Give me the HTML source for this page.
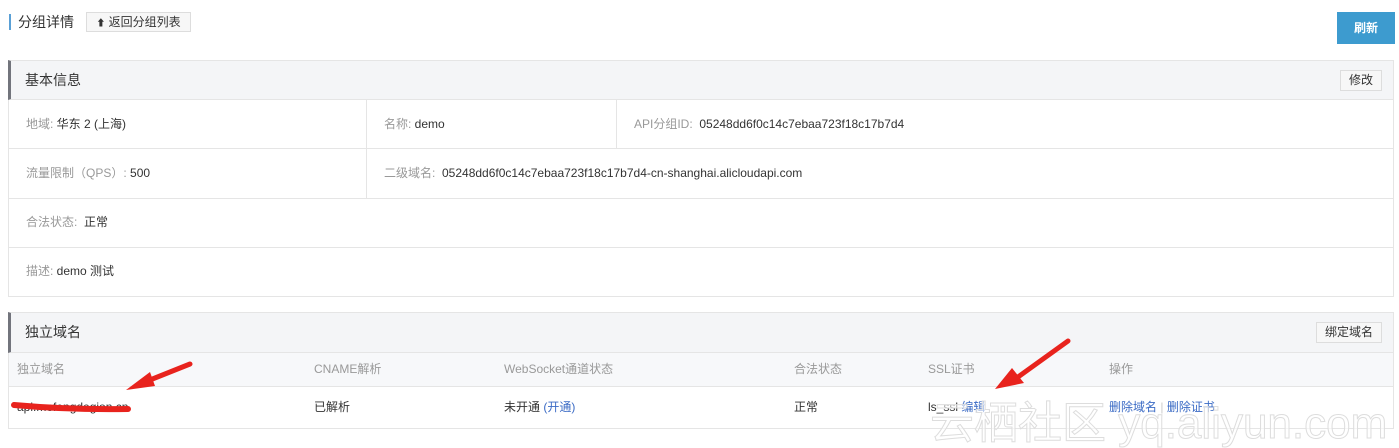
<!DOCTYPE html>
<html><head><meta charset="utf-8"><style>
*{box-sizing:border-box;margin:0;padding:0}
body{width:1399px;height:448px;background:#fff;font-family:"Liberation Sans","Noto Sans CJK SC",sans-serif;font-size:12px;color:#333;position:relative;overflow:hidden}
.a{position:absolute}
.lbl{color:#999}
.btn{position:absolute;border:1px solid #ddd;background:#f7f7f7;font-size:12px;color:#333;text-align:center}
.cell{position:absolute;height:49px;line-height:49px;padding-left:17px;border-right:1px solid #e5e5e5}
.link{color:#3b6bc5}
</style></head><body>
<div class="a" style="left:9px;top:14px;width:2px;height:16px;background:#5aa0d6"></div>
<div class="a" style="left:18px;top:13px;font-size:14px;line-height:18px;color:#333">分组详情</div>
<div class="btn" style="left:86px;top:12px;width:105px;height:20px;line-height:18px"><span style="font-size:9px">&#x2B06;&#xFE0E;</span> 返回分组列表</div>
<div class="a" style="left:1337px;top:12px;width:58px;height:32px;background:#3d9bcf;color:#fff;line-height:32px;text-align:center;font-weight:bold">刷新</div>

<div class="a" style="left:8px;top:60px;width:1386px;height:237px;border:1px solid #e5e5e5"></div>
<div class="a" style="left:8px;top:60px;width:1386px;height:40px;background:#f4f5f7;border:1px solid #e5e5e5;border-left:3px solid #72747c"></div>
<div class="a" style="left:25px;top:70px;font-size:14px;line-height:20px">基本信息</div>
<div class="btn" style="left:1340px;top:70px;width:42px;height:21px;line-height:19px">修改</div>

<div class="cell" style="left:9px;top:100px;width:358px"><span class="lbl">地域:</span> 华东 2 (上海)</div>
<div class="cell" style="left:367px;top:100px;width:250px"><span class="lbl">名称:</span> demo</div>
<div class="cell" style="left:617px;top:100px;width:770px;border:none"><span class="lbl">API分组ID:</span> &nbsp;05248dd6f0c14c7ebaa723f18c17b7d4</div>
<div class="a" style="left:9px;top:148px;width:1384px;border-top:1px solid #e5e5e5"></div>
<div class="cell" style="left:9px;top:149px;width:358px"><span class="lbl">流量限制（QPS）:</span> 500</div>
<div class="cell" style="left:367px;top:149px;width:900px;border:none"><span class="lbl">二级域名:</span> &nbsp;05248dd6f0c14c7ebaa723f18c17b7d4-cn-shanghai.alicloudapi.com</div>
<div class="a" style="left:9px;top:198px;width:1384px;border-top:1px solid #e5e5e5"></div>
<div class="cell" style="left:9px;top:198px;width:500px;border:none"><span class="lbl">合法状态:</span> &nbsp;正常</div>
<div class="a" style="left:9px;top:247px;width:1384px;border-top:1px solid #e5e5e5"></div>
<div class="cell" style="left:9px;top:247px;width:500px;border:none"><span class="lbl">描述:</span> demo 测试</div>

<div class="a" style="left:8px;top:312px;width:1386px;height:117px;border:1px solid #e5e5e5"></div>
<div class="a" style="left:8px;top:312px;width:1386px;height:41px;background:#f4f5f7;border:1px solid #e5e5e5;border-left:3px solid #72747c"></div>
<div class="a" style="left:25px;top:322px;font-size:14px;line-height:20px">独立域名</div>
<div class="btn" style="left:1316px;top:322px;width:66px;height:21px;line-height:19px">绑定域名</div>
<div class="a" style="left:9px;top:353px;width:1384px;height:34px;background:#f7f8fa;border-bottom:1px solid #e5e5e5;color:#999;line-height:32px">
<span class="a" style="left:8px">独立域名</span><span class="a" style="left:305px">CNAME解析</span><span class="a" style="left:495px">WebSocket通道状态</span><span class="a" style="left:785px">合法状态</span><span class="a" style="left:919px">SSL证书</span><span class="a" style="left:1100px">操作</span></div>
<div class="a" style="left:9px;top:387px;width:1384px;height:41px;line-height:40px">
<span class="a" style="left:8px">api.mofengdegion.cn</span><span class="a" style="left:305px">已解析</span><span class="a" style="left:495px">未开通 <span class="link">(开通)</span></span><span class="a" style="left:785px">正常</span><span class="a" style="left:919px">ls_ssl <span class="link">编辑</span></span><span class="a" style="left:1100px"><span class="link">删除域名</span> <span style="color:#ccc">|</span> <span class="link">删除证书</span></span></div>

<svg class="a" style="left:0;top:0" width="1399" height="448">
<path d="M14 405 Q70 410 128 409" stroke="#e8231d" stroke-width="6" fill="none" stroke-linecap="round"/>
<path d="M190 364 L145 382" stroke="#e8231d" stroke-width="5" stroke-linecap="round"/>
<polygon points="126,390 150,372 155,386" fill="#e8231d"/>
<path d="M1068 341 L1018 377" stroke="#e8231d" stroke-width="5" stroke-linecap="round"/>
<polygon points="995,389 1012,368 1024,383" fill="#e8231d"/>
<text x="930" y="438" font-size="44" fill="#fff" fill-opacity="0.6" stroke="#ddd" stroke-width="1" font-family="Liberation Sans,Noto Sans CJK SC,sans-serif">云栖社区 yq.aliyun.com</text>
</svg>
</body></html>
